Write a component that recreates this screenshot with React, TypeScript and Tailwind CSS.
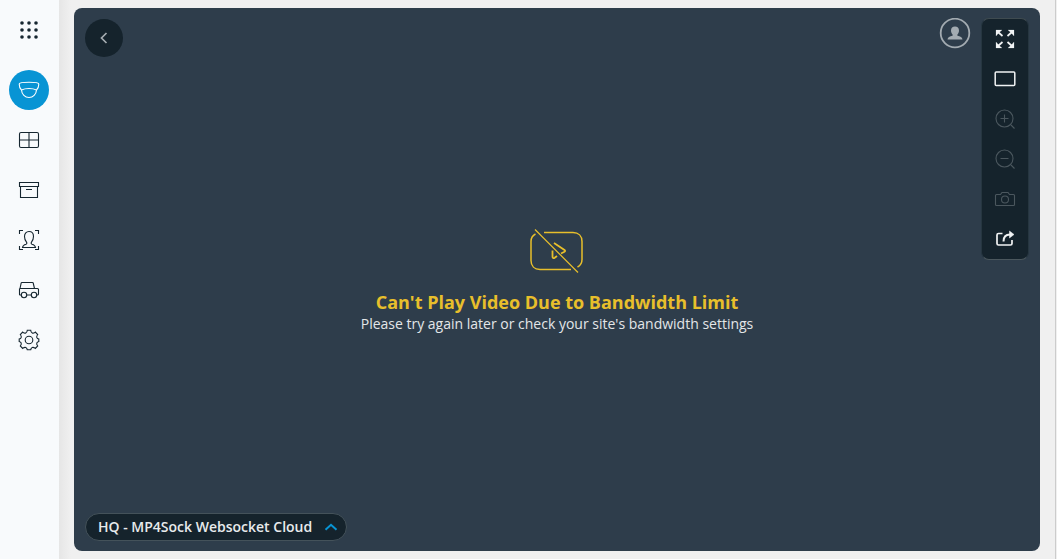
import { useState } from 'react'
import type { ReactNode } from 'react'

interface Item {
  id: string
  label: string
  icon: ReactNode
}

const navItems: Item[] = [
  {
    id: 'cameras',
    label: 'Cameras',
    icon: (
      <>
        <path d="M4.500 12C2.800 10.500 2.200 8 2.200 6c0-1 4-1.800 9.800-1.800s9.800.8 9.800 1.800c0 2-.6 4.500-2.300 6" />
        <path d="M4.500 12c2-1 4.500-1.500 7.500-1.500s5.500.5 7.500 1.500c-.3 4.500-3.500 7.500-7.500 7.500S4.800 16.500 4.500 12Z" />
      </>
    ),
  },
  {
    id: 'layouts',
    label: 'Layouts',
    icon: (
      <>
        <rect x="2.500" y="4.500" width="19" height="15" rx="1.500" />
        <path d="M12 4.500v15M2.500 12h19" />
      </>
    ),
  },
  {
    id: 'archive',
    label: 'Archive',
    icon: <path d="M2.500 4.500h19v4h-19zM3.500 8.500v11h17v-11M9 11.500h6" />,
  },
  {
    id: 'people',
    label: 'People',
    icon: (
      <>
        <path d="M2.500 6V2.500H6M18 2.500h3.500V6M21.500 18v3.500H18M6 21.500H2.500V18" />
        <path d="M5.500 19.500c.3-2.200 1.600-2.700 3.500-3.200 1-.3 1-1.400.5-2.200-1.300-1.600-2-3.300-2-5.600 0-3 1.800-5 4.500-5s4.500 2 4.500 5c0 2.300-.7 4-2 5.600-.5.8-.5 1.900.5 2.200 1.900.5 3.200 1 3.500 3.200Z" />
      </>
    ),
  },
  {
    id: 'vehicles',
    label: 'Vehicles',
    icon: (
      <>
        <path d="M3 10.500 4.200 5c.1-.4.300-.5.700-.5h10.600c.4 0 .6.100.7.500l1.300 5.500M2.500 10.500h18c.7 0 1 .3 1 1v4.500c0 .600-.4 1-1 1h-.8M4.300 17H3c-.4 0-.5-.1-.5-.5v-6M9.700 17h4.600" />
        <circle cx="7" cy="17" r="2.700" />
        <circle cx="17" cy="17" r="2.700" />
      </>
    ),
  },
  {
    id: 'settings',
    label: 'Settings',
    icon: (
      <>
        <path d="M10.300 2.200h3.400c.2 1.800.7 2.500 1.500 2.800.9.4 1.700.2 3.100-.9l2.400 2.400c-1.100 1.400-1.200 2.200-.9 3 .4.900 1 1.300 2 1.500v2.500c-1 .2-1.600.6-2 1.500-.3.800-.2 1.600.9 3l-2.400 2.400c-1.400-1.100-2.200-1.300-3.100-.9-.8.3-1.300 1-1.500 2.300h-3.400c-.2-1.300-.7-2-1.500-2.300-.9-.4-1.700-.2-3.100.9L3.300 18c1.100-1.400 1.200-2.200.9-3-.4-.9-1-1.300-2-1.500V11c1-.2 1.600-.6 2-1.500.3-.8.2-1.600-.9-3l2.400-2.400c1.400 1.100 2.200 1.300 3.100.9.800-.3 1.300-1 1.500-2.800Z" />
        <circle cx="12" cy="12" r="3.800" />
      </>
    ),
  },
]

const tools: (Item & { disabled?: boolean })[] = [
  {
    id: 'fullscreen',
    label: 'Fullscreen',
    icon: (
      <>
        <path d="m5 5 4.500 4M19 5l-4.500 4M5 19l4.500-4M19 19l-4.500-4" strokeWidth="1.700" />
        <path
          d="M3 3h6L7 4.800 4.800 7 3 9ZM21 3h-6l2 1.800L19.200 7 21 9ZM3 21h6l-2-1.800L4.800 17 3 15ZM21 21h-6l2-1.800 2.200-2.200 1.800-2Z"
          fill="currentColor"
          strokeWidth="0.200"
        />
      </>
    ),
  },
  {
    id: 'ratio',
    label: 'Aspect ratio',
    icon: <rect x="2.200" y="5" width="19.600" height="13.500" rx="1" strokeWidth="1.500" />,
  },
  {
    id: 'zoom-in',
    label: 'Zoom in',
    disabled: true,
    icon: (
      <>
        <circle cx="11.500" cy="11.500" r="8.500" />
        <path d="m18 18 3.500 3.500M7.500 11.500h8M11.500 7.500v8" />
      </>
    ),
  },
  {
    id: 'zoom-out',
    label: 'Zoom out',
    disabled: true,
    icon: (
      <>
        <circle cx="11.500" cy="11.500" r="8.500" />
        <path d="m18 18 3.500 3.500M7.500 11.500h8" />
      </>
    ),
  },
  {
    id: 'snapshot',
    label: 'Snapshot',
    disabled: true,
    icon: (
      <>
        <path d="M3.500 7.500h4L9 5.500h6l1.500 2h4c.6 0 1 .4 1 1v9c0 .600-.4 1-1 1h-17c-.6 0-1-.4-1-1v-9c0-.6.4-1 1-1Z" />
        <circle cx="12" cy="12.500" r="3.500" />
      </>
    ),
  },
  {
    id: 'share',
    label: 'Share',
    icon: (
      <>
        <path d="M9.500 6.500H5.500c-1 0-1.500.5-1.500 1.500v8.500c0 1 .5 1.500 1.500 1.500h12c1 0 1.500-.5 1.500-1.500V13" strokeWidth="1.700" />
        <path d="M10.500 14.500c0-4.500 2-7 6.500-7" strokeWidth="2" />
        <path d="M16.500 4 21 7.500l-4.500 3.500Z" fill="currentColor" strokeWidth="0.500" />
      </>
    ),
  },
]

function Icon({ children }: { children: ReactNode }) {
  return (
    <svg className="size-6" viewBox="0 0 24 24" fill="none" stroke="currentColor" strokeWidth="1.100" aria-hidden="true">
      {children}
    </svg>
  )
}

function Sidebar() {
  const [active, setActive] = useState('cameras')

  return (
    <nav className="flex w-[59px] shrink-0 flex-col items-start bg-[#f8fafc] px-[9px] py-[10px]">
      <button aria-label="Apps" className="mb-5 grid size-10 place-items-center text-[#162630]">
        <svg className="size-6" viewBox="0 0 24 24" fill="currentColor" aria-hidden="true">
          {[5, 12, 19].map(y => [5, 12, 19].map(x => <circle key={`${x}-${y}`} cx={x} cy={y} r="1.800" />))}
        </svg>
      </button>
      <div className="flex flex-col gap-[10px]">
        {navItems.map(item => (
          <button
            key={item.id}
            aria-label={item.label}
            onClick={() => setActive(item.id)}
            className={`grid size-10 place-items-center rounded-full ${
              active === item.id ? 'bg-[#0894d4] text-white' : 'text-[#162630]'
            }`}
          >
            <Icon>{item.icon}</Icon>
          </button>
        ))}
      </div>
    </nav>
  )
}

function Toolbar() {
  return (
    <div className="flex w-12 flex-col rounded-lg border border-[#263640] border-t-[#3f4b50] border-b-[#4b575d] bg-[#15232c]">
      {tools.map(tool => (
        <button
          key={tool.id}
          aria-label={tool.label}
          disabled={tool.disabled}
          className="grid h-10 place-items-center text-[#f1f3f4] disabled:text-[#4b575e]"
        >
          <Icon>{tool.icon}</Icon>
        </button>
      ))}
    </div>
  )
}

function PlaybackError() {
  return (
    <div role="alert" className="flex flex-col items-center pt-0.5 text-center">
      <svg className="mb-4 h-[46px] w-14" viewBox="0 0 56 46" fill="none" stroke="#e8bf2b" strokeWidth="1.500" aria-hidden="true">
        <path d="M15 4.500h29c5.500 0 9 3.500 9 9v18c0 3.500-1.500 6-4.500 7.500M42 41.500H11c-5.500 0-9-3.500-9-9v-19c0-3.500 1.500-6 4.500-7.500" />
        <path d="M6 1.500 49 44.500" strokeWidth="1.200" />
        <path d="m25 15 10.500 7c.8.600.8 1.200 0 1.700L32 25.500M23.500 22.500v6c0 1.500 1 2 2.200 1.200L28 28" strokeWidth="1.800" />
      </svg>
      <h1 className="text-lg leading-6 font-bold text-[#e8bf2b]">Can't Play Video Due to Bandwidth Limit</h1>
      <p className="text-sm leading-5 text-[#e3e6e8]">Please try again later or check your site's bandwidth settings</p>
    </div>
  )
}

export default function App() {
  const [open, setOpen] = useState(false)

  return (
    <div className="flex min-h-screen bg-[#f0f0f0] font-['Open_Sans',sans-serif]">
      <Sidebar />
      <main className="mr-px flex flex-1 border-r border-[#cccccc] bg-linear-to-r from-[#e6e6e6] to-[#f0f0f0] to-[12px] px-[15px] py-2">
        <section className="relative flex flex-1 items-center justify-center rounded-lg bg-[#2e3d4b]">
          <PlaybackError />

          <button
            aria-label="Back"
            className="absolute top-[11px] left-[11px] grid size-[38px] place-items-center rounded-full bg-[#15232c] text-[#a5acb1]"
          >
            <svg className="size-4" viewBox="0 0 16 16" fill="none" stroke="currentColor" strokeWidth="1.700" aria-hidden="true">
              <path d="M10.500 3 5.500 8l5 5" />
            </svg>
          </button>

          <div className="absolute top-[10px] right-[11px] flex items-start gap-[10px]">
            <button aria-label="Account" className="text-[#a3abb1]">
              <svg className="size-8" viewBox="0 0 32 32" fill="none" aria-hidden="true">
                <circle cx="16" cy="15" r="14.300" stroke="currentColor" strokeWidth="1.800" />
                <path
                  fill="currentColor"
                  d="M16 8.500c2.500 0 4 1.600 4 4 0 1.700-.7 3-1.600 3.900v1.300c3 .6 4.800 1.300 5.100 3.800h-15c.3-2.500 2.100-3.200 5.100-3.800v-1.300c-.9-.9-1.600-2.200-1.600-3.900 0-2.400 1.500-4 4-4Z"
                />
              </svg>
            </button>
            <Toolbar />
          </div>

          <button
            aria-expanded={open}
            onClick={() => setOpen(o => !o)}
            className="absolute bottom-[10px] left-[11px] flex h-7 items-center gap-3 rounded-full border border-[#44525a] bg-[#15232c] pr-2 pl-3 text-sm font-semibold text-[#e8ebec]"
          >
            HQ - MP4Sock Websocket Cloud
            <svg className="h-2 w-3.5" viewBox="0 0 14 8" fill="none" stroke="#0894d4" strokeWidth="2" aria-hidden="true">
              <path d="m1.500 6.800 5.500-5 5.500 5" />
            </svg>
          </button>
        </section>
      </main>
    </div>
  )
}
